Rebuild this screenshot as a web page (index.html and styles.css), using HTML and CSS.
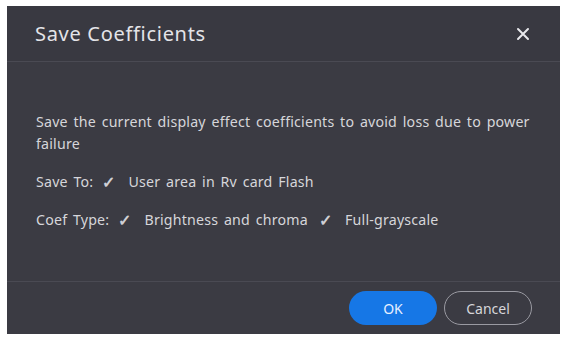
FILE: index.html
```html
<!DOCTYPE html>
<html>
<head>
<meta charset="utf-8">
<link rel="stylesheet" href="styles.css">
</head>
<body>
<div class="dialog">
  <div class="header">
    <span class="title">Save Coefficients</span>
    <span class="close">
      <svg width="14" height="14" viewBox="0 0 14 14"><path d="M2 2L12 12M12 2L2 12" stroke="#e8e8ec" stroke-width="2" stroke-linecap="round"/></svg>
    </span>
  </div>
  <div class="body">
    <p class="desc">Save the current display effect coefficients to avoid loss due to power failure</p>
    <div class="row"><span class="label">Save To:</span><span class="check">✓</span><span class="val">User area in Rv card Flash</span></div>
    <div class="row"><span class="label">Coef Type:</span><span class="check">✓</span><span class="val">Brightness and chroma</span><span class="check">✓</span><span class="val">Full-grayscale</span></div>
  </div>
  <div class="footer">
    <button class="btn ok">OK</button>
    <button class="btn cancel">Cancel</button>
  </div>
</div>
</body>
</html>
```
FILE: styles.css
```css
html, body { margin: 0; background: #ffffff; }
body { padding: 6px 5px 3px 7px; font-family: "Noto Sans", "Open Sans", sans-serif; }
.dialog {
  width: 553px;
  height: 328px;
  background: #3b3b43;
  display: flex;
  flex-direction: column;
  box-sizing: border-box;
}
.header {
  height: 55px;
  border-bottom: 1px solid #4a4a53;
  display: flex;
  align-items: center;
  justify-content: space-between;
  padding: 0 30px 0 28px;
  box-sizing: content-box;
  background: #393941;
}
.title { color: #e4e4e8; font-size: 20px; letter-spacing: 0.7px; }
.close { display: flex; width: 14px; height: 14px; }
.body {
  flex: 1;
  padding: 49px 20px 0 29px;
  color: #d6d6da;
  font-size: 14.2px;
  letter-spacing: 0.2px;
  word-spacing: 1.8px;
  border-bottom: 1px solid #4a4a53;
}
.desc { margin: 0; line-height: 22px; }
.row { margin-top: 16px; line-height: 22px; display: flex; }
.label { margin-right: 9px; }
.check { margin-right: 13px; font-size: 16px; font-weight: 600; color: #cfcfd4; }
.val + .check { margin-left: 11px; }
.footer {
  height: 52px;
  display: flex;
  align-items: center;
  justify-content: flex-end;
  padding-right: 28px;
  gap: 7px;
}
.btn {
  height: 34px;
  width: 88px;
  border-radius: 17px;
  font-family: inherit;
  font-size: 14px;
  cursor: pointer;
}
.ok { background: #1677e6; color: #e8f0ff; border: none; }
.cancel { background: transparent; color: #d6d6da; border: 1.5px solid #9a9aa2; }
```
